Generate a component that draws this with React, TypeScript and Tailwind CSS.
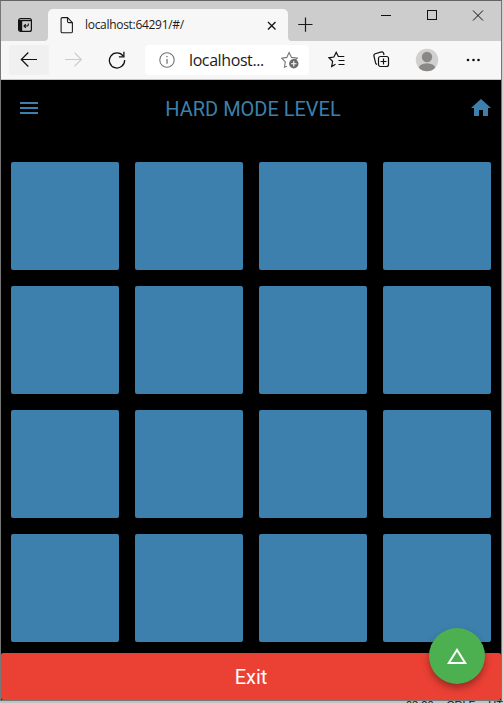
import React from "react";

const TILES = Array.from({ length: 16 }, (_, i) => i);

function TabStrip() {
  return (
    <div className="flex h-10 shrink-0 bg-[#cdcdcd] pl-[17px]">
      <svg className="mt-[17px] shrink-0" width="15" height="15" viewBox="0 0 15 15" fill="none">
        <rect x="0.6" y="0.6" width="12.8" height="12.8" rx="2" stroke="#111" strokeWidth="1.2" />
        <path d="M1 2.600h12" stroke="#111" strokeWidth="1.2" />
        <path d="M1 3h3.2v10H2L1 12z" fill="#111" />
        <path d="M10.300 5.500v1.200q0 1.300-1.300 1.300H6M7.800 6.200L6 8l1.800 1.800" stroke="#111" strokeWidth="1.1" />
      </svg>
      <div className="relative ml-[15px] mt-2 flex h-8 w-[240px] shrink-0 rounded-t-[5px] bg-[#f7f7f7]">
        <svg className="absolute -left-1 bottom-0" width="4" height="4" viewBox="0 0 4 4">
          <path d="M4 0v4H0Q4 4 4 0z" fill="#f7f7f7" />
        </svg>
        <svg className="absolute -right-1 bottom-0" width="4" height="4" viewBox="0 0 4 4">
          <path d="M0 0v4h4Q0 4 0 0z" fill="#f7f7f7" />
        </svg>
        <svg className="ml-3 mt-2 shrink-0" width="14" height="17" viewBox="0 0 14 17" fill="none" stroke="#1b1b1b" strokeWidth="1.1">
          <path d="M2.5.6h5l4.9 5v8.8q0 1.4-1.4 1.4H2.5Q1.1 15.800 1.100 14.400V2Q1.100.6 2.500.6z" />
          <path d="M7.500.6v3.600q0 1.400 1.400 1.400h3.500" />
        </svg>
        <span className="ml-[11px] mt-[7px] w-[180px] whitespace-nowrap font-['Open_Sans',sans-serif] text-[12px] leading-[18px] tracking-[-0.3px] text-[#1b1b1b]">
          localhost:64291/#/
        </span>
        <svg className="ml-[2px] mt-[12px] shrink-0" width="10" height="10" viewBox="0 0 10 10" stroke="#111" strokeWidth="1.3">
          <path d="M1 1l7.500 7.500M8.500 1L1 8.500" />
        </svg>
      </div>
      <svg className="ml-[9px] mt-4 shrink-0" width="16" height="16" viewBox="0 0 16 16" stroke="#1b1b1b" strokeWidth="1.2">
        <path d="M1.200 7.500h14.300M8.500.5v14.300" />
      </svg>
      <svg className="ml-[67px] mt-[9px] shrink-0" width="104" height="12" viewBox="0 0 104 12" fill="none" stroke="#111" strokeWidth="1">
        <path d="M1 5.500h10" />
        <rect x="47.500" y=".5" width="9" height="9" />
        <path d="M93 .5l10 10M103 .5L93 10.500" />
      </svg>
    </div>
  );
}

function Toolbar() {
  return (
    <div className="flex h-[38px] shrink-0 items-start bg-[#f7f7f7] pl-2 pt-1">
      <div className="flex h-[30px] w-10 items-center justify-center rounded-[3px] bg-[#f0f0f0]">
        <svg width="18" height="16" viewBox="0 0 18 16" fill="none" stroke="#111" strokeWidth="1.2">
          <path d="M17 7.500H1.500M8.300.5l-7 7 7 7" />
        </svg>
      </div>
      <svg className="ml-4 mt-[7px]" width="18" height="16" viewBox="0 0 18 16" fill="none" stroke="#cbcbcb" strokeWidth="1.200">
        <path d="M0 7.500h16M9.500.7l6.800 6.800-6.800 6.800" />
      </svg>
      <svg className="ml-[25px] mt-[6px]" width="18" height="18" viewBox="0 0 18 18" fill="none" stroke="#111" strokeWidth="1.300">
        <path d="M15.200 5A7.600 7.600 0 1 0 16.600 9" />
        <path d="M15.900.8v5h-5" />
      </svg>
      <div className="ml-[19px] flex h-[30px] w-[164px] items-center rounded-[4px] bg-white">
        <svg className="ml-[14px] shrink-0" width="16" height="16" viewBox="0 0 16 16" fill="none" stroke="#757575" strokeWidth="1.100">
          <circle cx="8" cy="8" r="7.200" />
          <path d="M8 7v4.700M8 4v1.300" strokeWidth="1.300" />
        </svg>
        <span className="ml-[14px] w-[77px] shrink-0 whitespace-nowrap font-['Open_Sans',sans-serif] text-[16px] leading-[24px] tracking-[-0.4px] text-[#1b1b1b]">
          localhost...
        </span>
        <svg className="ml-[15px] shrink-0" width="18" height="18" viewBox="0 0 18 18" fill="none">
          <path d="M6 15.200l-2.500 1 .8-5.300L.8 7.200l5-.8L8.100 1.500l2.400 4.900 5.800.7-2 2" stroke="#767676" strokeWidth="1.100" />
          <circle cx="12.800" cy="12.700" r="4.700" fill="#696969" />
          <path d="M12.800 10v5.400M10.100 12.700h5.400" stroke="#fff" strokeWidth="1.100" />
        </svg>
      </div>
      <svg className="ml-[19px] mt-[6px]" width="18" height="17" viewBox="0 0 18 17" fill="none" stroke="#111" strokeWidth="1.200">
        <path d="M7.500 13.200L3.700 15.500l.9-5.200L.9 6.800l5-.8 2.300-4.700L10.300 5.500h6M10.500 9.500H16.500M10.500 13.500H16.500" />
      </svg>
      <svg className="ml-[27px] mt-[6px]" width="18" height="18" viewBox="0 0 18 18" fill="none" stroke="#111" strokeWidth="1.200">
        <path d="M4 13.500Q2.900 13 2.500 11.700L.9 5Q.6 3.300 2.200 2.800L8.500.9q1.600-.3 2.100 1.300L11 4" />
        <rect x="5.500" y="5.500" width="10" height="10" rx="2" />
        <path d="M10.500 7.500v6M7.500 10.500h6" />
      </svg>
      <svg className="ml-6 mt-[3px]" width="24" height="24" viewBox="0 0 24 24">
        <defs><clipPath id="avatar"><circle cx="12" cy="12" r="11.200" /></clipPath></defs>
        <circle cx="12" cy="12" r="11.200" fill="#d2d0ce" />
        <g fill="#8a8886" clipPath="url(#avatar)">
          <circle cx="12" cy="9" r="5.200" />
          <ellipse cx="12" cy="20.500" rx="8.500" ry="5.300" />
        </g>
      </svg>
      <svg className="ml-[27px] mt-[13px]" width="15" height="4" viewBox="0 0 15 4" fill="#111">
        <circle cx="2" cy="2" r="1.300" /><circle cx="7.500" cy="2" r="1.300" /><circle cx="12.500" cy="2" r="1.300" />
      </svg>
    </div>
  );
}

function Game() {
  return (
    <main className="flex flex-1 flex-col bg-black font-[Roboto,sans-serif] text-[#3d80ad]">
      <header className="flex h-14 shrink-0 items-center justify-between pl-4 pr-2">
        <svg width="24" height="24" viewBox="0 0 24 24" fill="currentColor">
          <path d="M3 18h18v-2H3v2zm0-5h18v-2H3v2zm0-7v2h18V6H3z" />
        </svg>
        <h1 className="ml-[-4px] mt-[2px] whitespace-nowrap text-[20px] font-normal leading-6 tracking-[-0.02px]">HARD MODE LEVEL</h1>
        <svg width="24" height="24" viewBox="0 0 24 24" fill="currentColor">
          <path d="M10 20v-6h4v6h5v-8h3L12 3 2 12h3v8z" />
        </svg>
      </header>
      <div className="ml-[10px] mt-[26px] grid shrink-0 grid-cols-[repeat(4,108px)] gap-4">
        {TILES.map((tile) => (
          <button key={tile} className="size-[108px] rounded-[2px] bg-[#3d80ad]" aria-label={`Tile ${tile + 1}`} />
        ))}
      </div>
      <div className="relative mt-auto h-[47px] shrink-0">
        <button className="block h-full w-full rounded-[2px] bg-[#eb4034] pt-px text-[20px] text-white">Exit</button>
        <button aria-label="Open shapes" className="absolute right-4 top-[-25px] flex size-14 items-center justify-center rounded-full bg-[#4caf50] shadow-[0_4px_7px_rgba(0,0,0,0.35)]">
          <svg width="24" height="24" viewBox="0 0 24 24" fill="#fff">
            <path d="M12 7.770L18.390 18H5.610L12 7.770M12 4L2 20h20L12 4z" />
          </svg>
        </button>
      </div>
    </main>
  );
}

export default function App() {
  return (
    <div className="h-[703px] w-[503px] overflow-hidden bg-[#cfcfcf]">
      <div className="flex h-[701px] w-[502px] flex-col border border-t-[#646464] border-x-[#777] border-b-[#777]">
        <TabStrip />
        <Toolbar />
        <div className="h-px shrink-0 bg-[#c9c9c9]" />
        <Game />
      </div>
      <div className="flex h-[2px] gap-[13px] overflow-hidden bg-[#c2c2c2] pl-[406px] font-['Liberation_Sans',sans-serif] text-[11px] leading-[9px] text-[#111]">
        <span>03:20</span>
        <span>CRLF</span>
        <span>UTF</span>
      </div>
    </div>
  );
}
